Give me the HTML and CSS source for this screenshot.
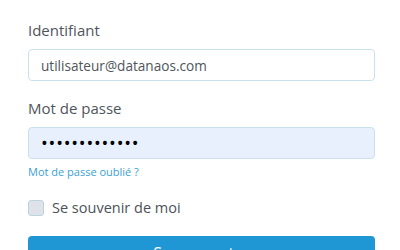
FILE: index.html
```html
<!DOCTYPE html>
<html lang="fr">
<head>
<meta charset="utf-8">
<title>Connexion</title>
<link rel="stylesheet" href="styles.css">
</head>
<body>
<form class="form">
  <label class="label" for="user">Identifiant</label>
  <input class="field" id="user" type="text" value="utilisateur@datanaos.com">
  <label class="label label-pass" for="pass">Mot de passe</label>
  <input class="field field-filled" id="pass" type="password" value="motdepasse123">
  <a class="forgot" href="#">Mot de passe oublié ?</a>
  <label class="remember"><span class="box"></span><span class="remember-text">Se souvenir de moi</span></label>
  <button class="submit" type="button">Se connecter</button>
</form>
</body>
</html>
```
FILE: styles.css
```css
html, body {
  margin: 0;
  padding: 0;
  background: #ffffff;
}
body {
  font-family: "Open Sans", "Noto Sans", sans-serif;
  color: #4d5258;
}
.form {
  display: flex;
  flex-direction: column;
  padding: 20px 25px 0 28px;
}
.label {
  font-size: 15px;
  line-height: 20px;
  margin-bottom: 9px;
  color: #50555b;
}
.label-pass {
  margin-top: 17px;
}
.field {
  box-sizing: border-box;
  height: 32px;
  width: 100%;
  margin: 0;
  border: 1px solid #c9e1ea;
  border-radius: 4px;
  padding: 0 12px;
  font-family: inherit;
  font-size: 13.6px;
  color: #50555b;
  background: #ffffff;
  outline: none;
}
.field-filled {
  background: #e8f0fe;
  color: #000;
  font-size: 18px;
  letter-spacing: 0.8px;
}
.forgot {
  font-size: 11px;
  line-height: 16px;
  margin-top: 5px;
  color: #3a9fd9;
  text-decoration: none;
}
.remember {
  display: flex;
  align-items: center;
  gap: 8px;
  margin-top: 18px;
  font-size: 14.5px;
  line-height: 20px;
}
.box {
  box-sizing: border-box;
  width: 16px;
  height: 16px;
  border: 1px solid #bcd3e0;
  border-radius: 3px;
  background: #dfe3e9;
}
.submit {
  margin-top: 18px;
  height: 34px;
  border: none;
  border-radius: 4px;
  background: #1f97d4;
  color: #fff;
  font-family: inherit;
  font-size: 16px;
  line-height: 20px;
  padding: 0;
}
```
